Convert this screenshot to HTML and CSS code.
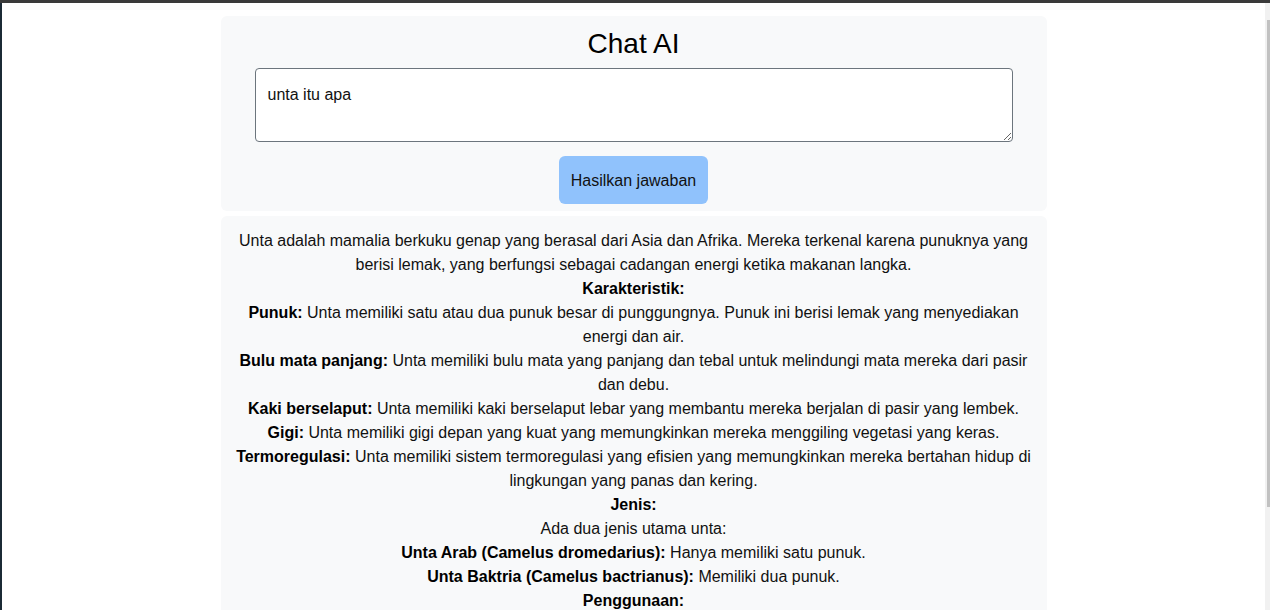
FILE: index.html
```html
<!DOCTYPE html>
<html lang="id">
<head>
<meta charset="utf-8">
<title>Chat AI</title>
<link rel="stylesheet" href="styles.css">
</head>
<body>
<div class="frame">
  <div class="topbar"></div>
  <div class="window">
    <div class="edge"></div>
    <main class="page">
      <div class="container">
        <section class="card prompt">
          <h1 class="title">Chat AI</h1>
          <textarea class="input">unta itu apa</textarea>
          <button class="btn" type="button">Hasilkan jawaban</button>
        </section>
        <section class="card answer">
          <p>Unta adalah mamalia berkuku genap yang berasal dari Asia dan Afrika. Mereka terkenal karena punuknya yang berisi lemak, yang berfungsi sebagai cadangan energi ketika makanan langka.</p>
          <p><b>Karakteristik:</b></p>
          <p><b>Punuk:</b> Unta memiliki satu atau dua punuk besar di punggungnya. Punuk ini berisi lemak yang menyediakan energi dan air.</p>
          <p><b>Bulu mata panjang:</b> Unta memiliki bulu mata yang panjang dan tebal untuk melindungi mata mereka dari pasir dan debu.</p>
          <p><b>Kaki berselaput:</b> Unta memiliki kaki berselaput lebar yang membantu mereka berjalan di pasir yang lembek.</p>
          <p><b>Gigi:</b> Unta memiliki gigi depan yang kuat yang memungkinkan mereka menggiling vegetasi yang keras.</p>
          <p><b>Termoregulasi:</b> Unta memiliki sistem termoregulasi yang efisien yang memungkinkan mereka bertahan hidup di lingkungan yang panas dan kering.</p>
          <p><b>Jenis:</b></p>
          <p>Ada dua jenis utama unta:</p>
          <p><b>Unta Arab (Camelus dromedarius):</b> Hanya memiliki satu punuk.</p>
          <p><b>Unta Baktria (Camelus bactrianus):</b> Memiliki dua punuk.</p>
          <p><b>Penggunaan:</b></p>
        </section>
      </div>
    </main>
    <div class="scrollbar"><div class="thumb"></div></div>
  </div>
</div>
</body>
</html>
```

FILE: styles.css
```css
* { box-sizing: border-box; }

html, body {
  margin: 0;
  padding: 0;
  height: 610px;
  overflow: hidden;
}

body {
  font-family: "Liberation Sans", Arial, sans-serif;
  font-size: 16px;
  line-height: 24px;
  color: #111;
  background: #ffffff;
}

.frame {
  display: flex;
  flex-direction: column;
  height: 610px;
}

.topbar {
  height: 3px;
  background: #3a3a3a;
  flex: none;
}

.window {
  display: flex;
  flex: 1;
  min-height: 0;
}

.edge {
  width: 2px;
  flex: none;
  background: #1b2a35;
}

.page {
  flex: 1;
  background: #ffffff;
  overflow: hidden;
}

.scrollbar {
  width: 5px;
  flex: none;
  background: #f1f1f1;
  padding: 17px 0 0 2px;
}

.thumb {
  width: 3px;
  height: 487px;
  background: #c1c1c1;
}

.container {
  width: 826px;
  margin: 13px auto 0;
}

.card {
  background: #f8f9fa;
  border-radius: 6px;
  text-align: center;
}

.prompt {
  padding: 11px 34px 7px;
  display: flex;
  flex-direction: column;
  align-items: center;
}

.title {
  margin: 0 0 7px;
  font-size: 28px;
  line-height: 34px;
  font-weight: 400;
  color: #000;
}

.input {
  display: block;
  width: 100%;
  height: 74px;
  padding: 14px 12px 10px;
  border: 1px solid #6c757d;
  border-radius: 4px;
  font-family: inherit;
  font-size: 16px;
  line-height: 24px;
  color: #111;
  background: #ffffff;
  resize: vertical;
}

.btn {
  margin-top: 14px;
  padding: 13px 12px 11px;
  border: none;
  border-radius: 6px;
  background: #90c2fc;
  color: #111;
  font-family: inherit;
  font-size: 16px;
  line-height: 24px;
}

.answer {
  margin-top: 5px;
  padding: 13px 12px 40px;
}

.answer p {
  margin: 0;
}

.answer b {
  font-weight: 700;
  color: #000;
}
```
